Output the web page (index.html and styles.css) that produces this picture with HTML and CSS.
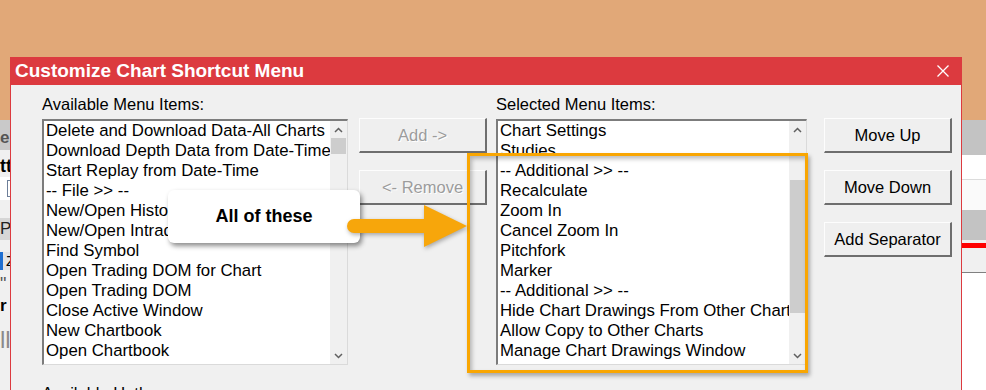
FILE: index.html
```html
<!DOCTYPE html>
<html>

<head>
  <title>Customize Chart Shortcut Menu</title>
  <meta charset="utf-8">
  <link rel="stylesheet" href="styles.css">
</head>

<body>
  <!-- chart window behind the dialog, only its edges show -->
  <div class="backdrop">
    <div class="strip strip-left">
      <div class="band band-tab">e</div>
      <div class="band band-head">tt</div>
      <div class="band band-input"><span></span></div>
      <div class="band band-gap"></div>
      <div class="band band-tool">Po</div>
      <div class="band band-gap-sm"></div>
      <div class="band band-sel">Z</div>
      <div class="band band-text">
        <div class="frag frag-quote">"</div>
        <div class="frag frag-r">r</div>
        <div class="frag frag-ll">ll</div>
      </div>
    </div>
    <div class="strip strip-right">
      <div class="band r-gray"></div>
      <div class="band r-white"></div>
      <div class="band r-white2"></div>
      <div class="band r-gray2"></div>
      <div class="band r-gap"></div>
      <div class="band r-red"></div>
      <div class="band r-light"></div>
    </div>
  </div>

  <div class="dialog">
    <div class="titlebar">
      <span class="title">Customize Chart Shortcut Menu</span>
      <svg class="close" width="12" height="12" viewBox="0 0 12 12">
        <path d="M0.5 0.5 L11.5 11.5 M11.5 0.5 L0.5 11.5" stroke="#fff" stroke-width="1.3" />
      </svg>
    </div>

    <div class="dialog-body">
      <div class="columns">
        <div class="col col-left">
          <div class="label">Available Menu Items:</div>
          <div class="listbox">
            <div class="items">
              <div class="item">Delete and Download Data-All Charts</div>
              <div class="item">Download Depth Data from Date-Time</div>
              <div class="item">Start Replay from Date-Time</div>
              <div class="item">-- File &gt;&gt; --</div>
              <div class="item">New/Open Historical Chart</div>
              <div class="item">New/Open Intraday Chart</div>
              <div class="item">Find Symbol</div>
              <div class="item">Open Trading DOM for Chart</div>
              <div class="item">Open Trading DOM</div>
              <div class="item">Close Active Window</div>
              <div class="item">New Chartbook</div>
              <div class="item">Open Chartbook</div>
            </div>
            <div class="scrollbar">
              <div class="sb-arrow">
                <svg width="9" height="6" viewBox="0 0 9 6"><path d="M1 5 L4.5 1.5 L8 5" fill="none" stroke="#606060" stroke-width="1.5" /></svg>
              </div>
              <div class="sb-track"><div class="sb-thumb thumb-left"></div></div>
              <div class="sb-arrow">
                <svg width="9" height="6" viewBox="0 0 9 6"><path d="M1 1 L4.5 4.5 L8 1" fill="none" stroke="#606060" stroke-width="1.5" /></svg>
              </div>
            </div>
          </div>
        </div>

        <div class="col col-buttons">
          <button class="btn" disabled>Add -&gt;</button>
          <button class="btn" disabled>&lt;- Remove</button>
        </div>

        <div class="col col-right">
          <div class="label">Selected Menu Items:</div>
          <div class="listbox listbox-wide">
            <div class="items">
              <div class="item">Chart Settings</div>
              <div class="item">Studies</div>
              <div class="item">-- Additional &gt;&gt; --</div>
              <div class="item">Recalculate</div>
              <div class="item">Zoom In</div>
              <div class="item">Cancel Zoom In</div>
              <div class="item">Pitchfork</div>
              <div class="item">Marker</div>
              <div class="item">-- Additional &gt;&gt; --</div>
              <div class="item">Hide Chart Drawings From Other Charts</div>
              <div class="item">Allow Copy to Other Charts</div>
              <div class="item">Manage Chart Drawings Window</div>
            </div>
            <div class="scrollbar">
              <div class="sb-arrow">
                <svg width="9" height="6" viewBox="0 0 9 6"><path d="M1 5 L4.5 1.5 L8 5" fill="none" stroke="#606060" stroke-width="1.5" /></svg>
              </div>
              <div class="sb-track"><div class="sb-thumb thumb-right"></div></div>
              <div class="sb-arrow">
                <svg width="9" height="6" viewBox="0 0 9 6"><path d="M1 1 L4.5 4.5 L8 1" fill="none" stroke="#606060" stroke-width="1.5" /></svg>
              </div>
            </div>
          </div>
        </div>

        <div class="col col-buttons col-actions">
          <button class="btn">Move Up</button>
          <button class="btn">Move Down</button>
          <button class="btn">Add Separator</button>
        </div>
      </div>

      <div class="label label-next">Available Hotkeys:</div>
    </div>
  </div>

  <!-- annotation drawn over the screenshot -->
  <div class="highlight"></div>
  <div class="callout">All of these</div>
  <svg class="arrow" width="135" height="55" viewBox="340 200 135 55">
    <path d="M354 219 H429 V233 H354 A7 7 0 0 1 354 219 Z" fill="#f7a60b" />
    <polygon points="424,205 467,226 424,247" fill="#f7a60b" />
  </svg>
</body>
</html>
```

FILE: styles.css
```css
/* variables */
:root {
  --desk: #e1a878;
  --title: #dc3a3f;
  --face: #f0f0f0;
  --mark: #f9a602;
  --thumb: #cdcdcd;
}

* {
  box-sizing: border-box;
}

html,
body {
  margin: 0;
  padding: 0;
}

body {
  position: relative;
  width: 986px;
  height: 390px;
  overflow: hidden;
  background: var(--desk);
  font-family: "Liberation Sans", Arial, sans-serif;
  color: #000;
}

/* window behind the dialog */
.backdrop {
  position: absolute;
  top: 120px;
  left: 0;
  right: 0;
  bottom: 0;
  display: flex;
  justify-content: space-between;
}

.strip {
  display: flex;
  flex-direction: column;
  overflow: hidden;
  white-space: nowrap;
}

.strip-left {
  width: 10px;
  background: var(--face);
}

.strip-right {
  width: 24px;
  background: #fff;
}

.band {
  flex: none;
  overflow: hidden;
}

.band-tab {
  height: 30px;
  padding-top: 6px;
  line-height: 24px;
  background: #c9c9c9;
  color: #555;
  font-size: 17px;
  font-weight: bold;
}

.band-head {
  height: 27px;
  padding-top: 4px;
  line-height: 24px;
  font-size: 18px;
  font-weight: bold;
}

.band-input {
  height: 23px;
  background: #fff;
  padding: 3px 0 3px 7px;
}

.band-input span {
  display: block;
  height: 100%;
  border-left: 1px solid #6d7f99;
  border-top: 1px solid #6d7f99;
  border-bottom: 1px solid #6d7f99;
}

.band-gap {
  height: 18px;
}

.band-tool {
  height: 22px;
  line-height: 22px;
  background: #d6d6d6;
  color: #222;
  font-size: 17px;
}

.band-gap-sm {
  height: 12px;
}

.band-sel {
  height: 18px;
  line-height: 18px;
  padding-left: 3px;
  border-left: 3px solid #1f6fd1;
  background: #e4e4e4;
  font-size: 15px;
}

.band-text {
  flex: 1;
  padding-top: 4px;
}

.frag-quote {
  height: 22px;
  font-size: 18px;
  color: #555;
}

.frag-r {
  height: 30px;
  font-size: 17px;
  font-weight: bold;
}

.frag-ll {
  font-size: 24px;
  color: #8a8a8a;
}

.r-gray {
  height: 35px;
  background: #c3c3c3;
}

.r-white {
  height: 25px;
  border-bottom: 1px solid #dcdcdc;
}

.r-white2 {
  height: 30px;
  background: #fafafa;
}

.r-gray2 {
  height: 30px;
  background: #c3c3c3;
}

.r-gap {
  height: 3px;
  background: var(--face);
}

.r-red {
  height: 5px;
  background: #ff0000;
}

.r-light {
  height: 25px;
  background: var(--face);
  border-bottom: 1px solid #808080;
}

/* dialog window */
.dialog {
  position: absolute;
  left: 10px;
  top: 57px;
  width: 952px;
  height: 333px;
  overflow: hidden;
  display: flex;
  flex-direction: column;
  background: var(--face);
  border-left: 1px solid var(--title);
  border-right: 1px solid var(--title);
}

.titlebar {
  flex: none;
  height: 28px;
  display: flex;
  align-items: center;
  justify-content: space-between;
  padding: 0 12px 0 4px;
  background: var(--title);
  color: #fff;
}

.title {
  font-size: 19px;
  font-weight: bold;
}

.dialog-body {
  padding: 10px 0 0 31px;
}

.columns {
  display: flex;
}

.col {
  display: flex;
  flex-direction: column;
}

.col-left {
  width: 306px;
}

.col-buttons {
  width: 128px;
  margin-left: 11px;
  padding-top: 23px;
  gap: 17px;
}

.col-right {
  width: 311px;
  margin-left: 9px;
}

.col-actions {
  margin-left: 17px;
}

.label {
  height: 19px;
  line-height: 19px;
  margin-bottom: 5px;
  font-size: 16.5px;
}

.label-next {
  margin-top: 19px;
}

/* list boxes */
.listbox {
  height: 246px;
  display: flex;
  background: #fff;
  border-top: 2px solid #7c7c7c;
  border-left: 2px solid #7c7c7c;
  border-right: 1px solid #dadada;
  border-bottom: 1px solid #dadada;
}

.items {
  flex: 1;
  min-width: 0;
  overflow: hidden;
  white-space: nowrap;
  padding-left: 2px;
}

.item {
  height: 20px;
  line-height: 20px;
  font-size: 16.8px;
}

.scrollbar {
  width: 17px;
  display: flex;
  flex-direction: column;
  background: var(--face);
}

.sb-arrow {
  height: 17px;
  display: flex;
  align-items: center;
  justify-content: center;
}

.sb-track {
  flex: 1;
}

.sb-thumb {
  margin: 0 1px;
  background: var(--thumb);
}

.thumb-left {
  height: 16px;
}

.thumb-right {
  margin-top: 42px;
  height: 133px;
}

/* buttons */
.btn {
  height: 35px;
  padding: 0;
  font-family: "Liberation Sans", Arial, sans-serif;
  font-size: 16.5px;
  color: #000;
  background: #efefef;
  border-top: 1px solid #fdfdfd;
  border-left: 1px solid #fdfdfd;
  border-right: 2px solid #6e6e6e;
  border-bottom: 2px solid #6e6e6e;
  border-radius: 0;
}

.btn:disabled {
  color: #9c9c9c;
  text-shadow: 1px 1px 0 #fff;
}

/* annotation */
.highlight {
  position: absolute;
  left: 467px;
  top: 153px;
  width: 341px;
  height: 220px;
  border: 3px solid var(--mark);
  box-shadow: 2px 3px 4px rgba(0, 0, 0, 0.3), inset 2px 3px 4px rgba(0, 0, 0, 0.25);
}

.callout {
  position: absolute;
  left: 168px;
  top: 190px;
  width: 192px;
  height: 53px;
  display: flex;
  align-items: center;
  justify-content: center;
  background: #fff;
  border-radius: 6px;
  box-shadow: 2px 3px 5px rgba(0, 0, 0, 0.45);
  font-size: 18px;
  font-weight: bold;
}

.arrow {
  position: absolute;
  left: 340px;
  top: 200px;
  filter: drop-shadow(1px 2px 2px rgba(0, 0, 0, 0.3));
}
```
